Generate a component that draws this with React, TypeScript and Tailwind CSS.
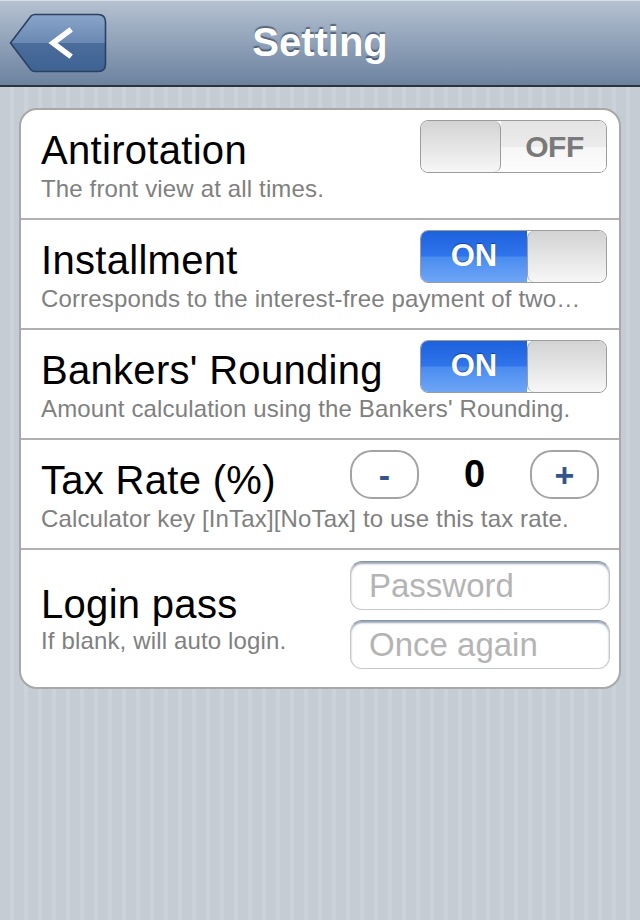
import React from "react";

function BackButton() {
  return (
    <svg width="98" height="60" viewBox="0 0 98 60" className="absolute left-[9px] top-[13px]">
      <defs>
        <linearGradient id="bb" x1="0" y1="0" x2="0" y2="1">
          <stop offset="0" stopColor="#8aa5c9" />
          <stop offset="0.5" stopColor="#6a89b3" />
          <stop offset="0.5" stopColor="#4a6d9c" />
          <stop offset="1" stopColor="#3e6292" />
        </linearGradient>
      </defs>
      <path
        d="M1.5 30 L22 3 Q23.5 1.5 26 1.5 L89 1.5 Q96.5 1.5 96.5 9 L96.5 51 Q96.5 58.5 89 58.5 L26 58.5 Q23.5 58.5 22 57 Z"
        fill="url(#bb)"
        stroke="#2c4061"
        strokeWidth="1.6"
      />
      <path d="M60 18 L44 30 L60 42" fill="none" stroke="#fff" strokeWidth="5.5" strokeLinecap="square" />
    </svg>
  );
}

function Switch({ on }: { on: boolean }) {
  return (
    <div className="mt-[10px] mr-[12px] flex h-[53px] w-[187px] shrink-0 overflow-hidden rounded-[8px] border border-[#9c9c9c]">
      {on ? (
        <>
          <div className="flex w-[107px] items-center justify-center bg-[linear-gradient(#1d62dd,#2f74ea_48%,#4a8cf0_52%,#6ea6f6)] text-[31px] font-bold text-white [text-shadow:0_-1px_1px_rgba(0,40,120,0.6)]">
            ON
          </div>
          <div className="w-[80px] rounded-[7px] border-l border-[#9c9c9c] bg-gradient-to-b from-[#d3d3d3] to-[#f7f7f7]" />
        </>
      ) : (
        <>
          <div className="w-[80px] rounded-[7px] border-r border-[#9c9c9c] bg-gradient-to-b from-[#d3d3d3] to-[#f7f7f7]" />
          <div className="flex flex-1 items-center justify-center bg-[linear-gradient(#e4e4e4,#ececec_50%,#f6f6f6_52%,#fdfdfd)] pl-[2px] text-[30px] font-bold tracking-[-0.5px] text-[#7a7a7a]">
            OFF
          </div>
        </>
      )}
    </div>
  );
}

function Row({
  title,
  sub,
  children,
  last,
}: {
  title: string;
  sub: string;
  children: React.ReactNode;
  last?: boolean;
}) {
  return (
    <div className={`h-[108px] pl-[20px] ${last ? "" : "border-b-2 border-[#b0b0b0]"} box-content`}>
      <div className="flex h-[63px] items-start justify-between">
        <div className="pt-[14px] text-[40px] leading-[53px] tracking-[0.3px] text-black">{title}</div>
        {children}
      </div>
      <div className="mt-[2px] whitespace-nowrap text-[24px] leading-[28px] tracking-[0.15px] text-[#808080]">{sub}</div>
    </div>
  );
}

function RoundBtn({ label }: { label: string }) {
  return (
    <div className="flex h-[49px] w-[69px] items-center justify-center rounded-[22px] border-2 border-[#a3a3a3] bg-white text-[34px] font-bold leading-none text-[#34558a]">
      {label}
    </div>
  );
}

function Field({ placeholder }: { placeholder: string }) {
  return (
    <input
      placeholder={placeholder}
      className="h-[49px] w-[260px] rounded-[12px] border border-[#c4c8cd] border-t-[#8593a8] bg-white pl-[18px] text-[33px] text-black shadow-[inset_0_2px_2px_rgba(70,90,120,0.55)] outline-none placeholder:text-[#b4b4b4]"
    />
  );
}

export default function App() {
  return (
    <div className="min-h-[920px] w-[640px] bg-[image:repeating-linear-gradient(90deg,#c5ccd4_0px,#c5ccd4_10px,#cbd2d9_10px,#cbd2d9_14px)] font-['Liberation_Sans',Arial,sans-serif]">
      <div className="relative h-[87px] border-b-2 border-[#2d333c] bg-gradient-to-b from-[#b6c2d1] via-[#90a2b9] to-[#6c829f]">
        <div className="h-px bg-[#d6dde6]" />
        <BackButton />
        <div className="pt-[11px] text-center text-[40px] font-bold leading-[60px] text-white [text-shadow:0_-2px_1px_rgba(40,55,80,0.6)]">
          Setting
        </div>
      </div>

      <div className="ml-[19px] mt-[21px] w-[602px] overflow-hidden rounded-[18px] border-2 border-[#a8a8a8] bg-white">
        <Row title="Antirotation" sub="The front view at all times.">
          <Switch on={false} />
        </Row>
        <Row title="Installment" sub="Corresponds to the interest-free payment of two…">
          <Switch on={true} />
        </Row>
        <Row title="Bankers' Rounding" sub="Amount calculation using the Bankers' Rounding.">
          <Switch on={true} />
        </Row>
        <Row title="Tax Rate (%)" sub="Calculator key [InTax][NoTax] to use this tax rate.">
          <div className="mr-[20px] mt-[10px] flex items-center">
            <RoundBtn label="-" />
            <div className="w-[111px] text-center text-[38px] font-bold leading-[49px] text-black">0</div>
            <RoundBtn label="+" />
          </div>
        </Row>
        <div className="flex h-[137px] items-start justify-between pl-[20px]">
          <div className="self-center">
            <div className="text-[40px] leading-[44px] tracking-[0.3px] text-black">Login pass</div>
            <div className="mt-[1px] text-[24px] leading-[28px] tracking-[0.15px] text-[#808080]">If blank, will auto login.</div>
          </div>
          <div className="mr-[9px] mt-[11px] flex flex-col gap-[10px]">
            <Field placeholder="Password" />
            <Field placeholder="Once again" />
          </div>
        </div>
      </div>
    </div>
  );
}
